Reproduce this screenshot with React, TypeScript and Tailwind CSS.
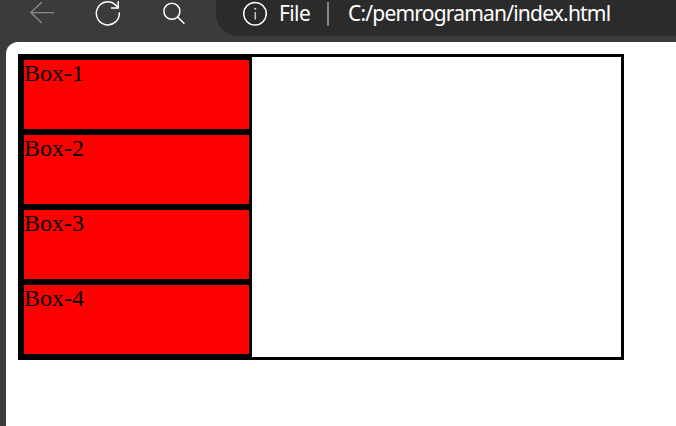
const boxes = ['Box-1', 'Box-2', 'Box-3', 'Box-4'];

function BackIcon() {
  return (
    <svg className="h-[42px] w-6 shrink-0" viewBox="30 0 24 42" fill="none" stroke="#8a8a8a" strokeWidth="1.4">
      <path d="M54 12.6H30.6M41.8 2.2L30.8 12.6L41.8 23" />
    </svg>
  );
}

function ReloadIcon() {
  return (
    <svg className="ml-10 h-[42px] w-7 shrink-0" viewBox="94 0 28 42" fill="none" stroke="#ffffff" strokeWidth="1.5">
      <path d="M119.3 12.4A11.5 11.5 0 1 1 115.6 4.9L118 7.6" />
      <path d="M118.2 1.3V8H111" />
    </svg>
  );
}

function SearchIcon() {
  return (
    <svg className="ml-10 h-[42px] w-6 shrink-0" viewBox="162 0 24 42" fill="none" stroke="#ffffff" strokeWidth="1.5">
      <circle cx="171.9" cy="11.3" r="8" />
      <path d="M177.6 17L184.4 23.8" />
    </svg>
  );
}

function InfoIcon() {
  return (
    <svg className="h-9 w-6 shrink-0" viewBox="243 0 24 36" fill="none" stroke="#ffffff" strokeWidth="1.5">
      <circle cx="255" cy="13.7" r="11.3" />
      <path d="M255.3 12V19.6" stroke="#c8c8c8" />
      <circle cx="255.3" cy="8.7" r="1" fill="#dddddd" stroke="none" />
    </svg>
  );
}

function Toolbar() {
  return (
    <header className="flex h-[42px] pl-[30px]">
      <BackIcon />
      <ReloadIcon />
      <SearchIcon />
      <div className="ml-[30px] flex h-9 flex-1 overflow-hidden rounded-bl-[22px] bg-[#2b2b2b] pl-[27px] font-['Noto_Sans','Open_Sans',sans-serif] text-[21px] leading-[26px] text-white">
        <InfoIcon />
        <span className="ml-3 w-12 tracking-[-0.6px]">File</span>
        <span className="mt-0.5 h-6 w-[2px] bg-[#858585]" />
        <span className="ml-[19px] whitespace-nowrap tracking-[-0.8px]">C:/pemrograman/index.html</span>
      </div>
    </header>
  );
}

export default function App() {
  return (
    <div className="flex h-[426px] w-[676px] flex-col overflow-hidden bg-[#3b3b3b]">
      <Toolbar />
      <main className="ml-1.5 flex-1 rounded-tl-xl bg-white p-3">
        <div className="h-[306px] w-[606px] border-[3px] border-black">
          {boxes.map((label) => (
            <div
              key={label}
              className="h-[75px] w-[231px] border-[3px] border-black bg-[#ff0000] font-['Liberation_Serif',serif] text-[24px] leading-[27px] text-black"
            >
              {label}
            </div>
          ))}
        </div>
      </main>
    </div>
  );
}
